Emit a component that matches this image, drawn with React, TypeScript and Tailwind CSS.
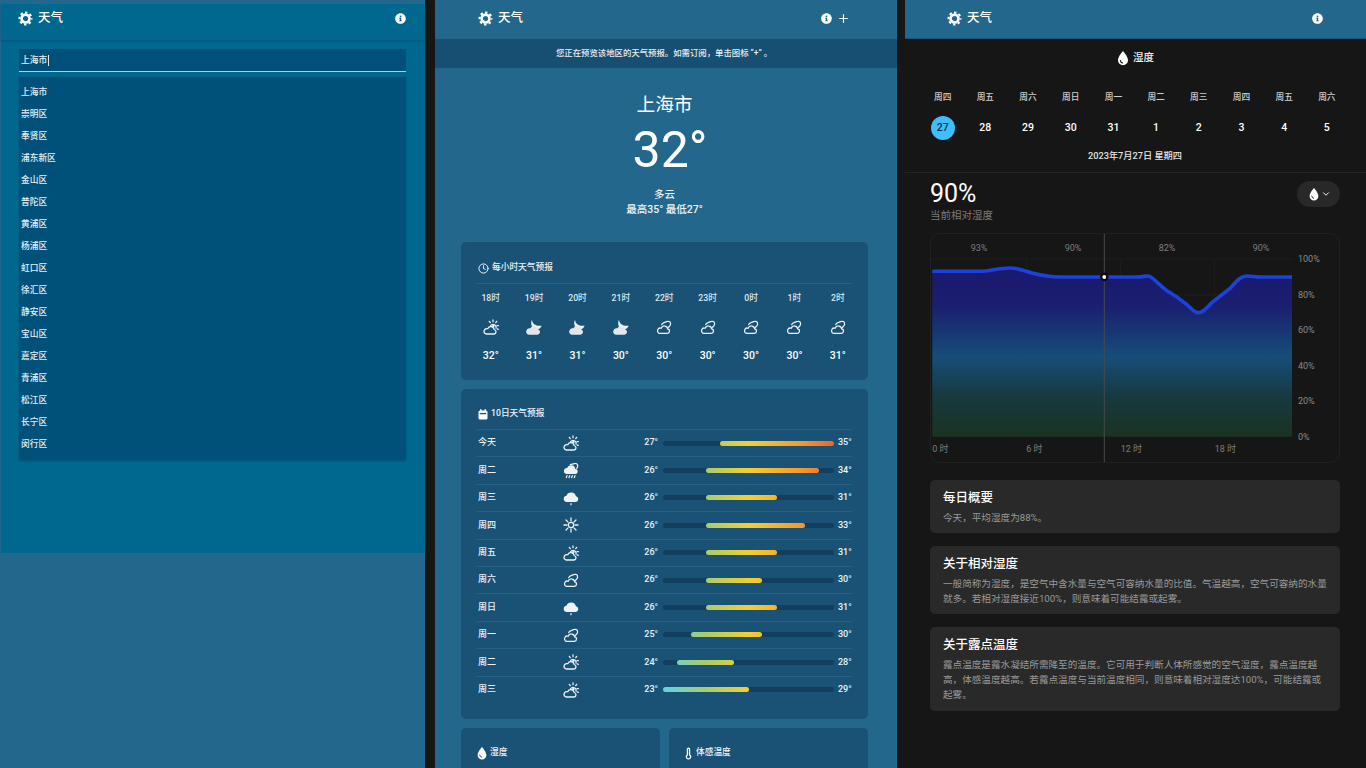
import React from 'react';
import { FaInfoCircle } from 'react-icons/fa';
import { ChevronDown, Clock, Plus, Thermometer } from 'lucide-react';

type WeatherKind = 'partly' | 'moon' | 'clouds' | 'rain' | 'drizzle' | 'sun';

const cities = ['上海市', '崇明区', '奉贤区', '浦东新区', '金山区', '普陀区', '黄浦区', '杨浦区', '虹口区', '徐汇区', '静安区', '宝山区', '嘉定区', '青浦区', '松江区', '长宁区', '闵行区'];

const hours: { label: string; kind: WeatherKind; temp: string }[] = [
  { label: '18时', kind: 'partly', temp: '32°' },
  { label: '19时', kind: 'moon', temp: '31°' },
  { label: '20时', kind: 'moon', temp: '31°' },
  { label: '21时', kind: 'moon', temp: '30°' },
  { label: '22时', kind: 'clouds', temp: '30°' },
  { label: '23时', kind: 'clouds', temp: '30°' },
  { label: '0时', kind: 'clouds', temp: '30°' },
  { label: '1时', kind: 'clouds', temp: '30°' },
  { label: '2时', kind: 'clouds', temp: '31°' },
];

const days: { label: string; kind: WeatherKind; low: string; high: string; from: number; to: number }[] = [
  { label: '今天', kind: 'partly', low: '27°', high: '35°', from: 0.333, to: 1 },
  { label: '周二', kind: 'rain', low: '26°', high: '34°', from: 0.25, to: 0.914 },
  { label: '周三', kind: 'drizzle', low: '26°', high: '31°', from: 0.25, to: 0.667 },
  { label: '周四', kind: 'sun', low: '26°', high: '33°', from: 0.25, to: 0.83 },
  { label: '周五', kind: 'partly', low: '26°', high: '31°', from: 0.25, to: 0.667 },
  { label: '周六', kind: 'clouds', low: '26°', high: '30°', from: 0.25, to: 0.58 },
  { label: '周日', kind: 'drizzle', low: '26°', high: '31°', from: 0.25, to: 0.667 },
  { label: '周一', kind: 'clouds', low: '25°', high: '30°', from: 0.165, to: 0.58 },
  { label: '周二', kind: 'partly', low: '24°', high: '28°', from: 0.084, to: 0.414 },
  { label: '周三', kind: 'partly', low: '23°', high: '29°', from: 0, to: 0.5 },
];

const calendar = [
  ['周四', '27'], ['周五', '28'], ['周六', '29'], ['周日', '30'], ['周一', '31'],
  ['周二', '1'], ['周三', '2'], ['周四', '3'], ['周五', '4'], ['周六', '5'],
];

const TRACK_WIDTH = 171;

const Gear: React.FC = () => (
  <svg width="15" height="15" viewBox="0 0 24 24" fill="none" stroke="#fff" className="shrink-0">
    <circle cx="12" cy="12" r="6.300" strokeWidth="4.200" />
    <circle cx="12" cy="12" r="9.600" strokeWidth="3.200" strokeDasharray="3.900 3.640" strokeDashoffset="1.950" />
  </svg>
);

const Drop: React.FC<{ size?: number; inner: string }> = ({ size = 12, inner }) => (
  <svg width={size} height={size} viewBox="0 0 24 24">
    <path d="M12 1.500C12 1.500 4.500 9.500 4.500 15.500a7.500 7.500 0 0 0 15 0C19.500 9.500 12 1.500 12 1.500z" fill="#fff" />
    <path d="M8 15.500a4.500 4.500 0 0 0 3.500 4" fill="none" stroke={inner} strokeWidth="1.600" strokeLinecap="round" />
  </svg>
);

const CalendarIcon: React.FC = () => (
  <svg width="10" height="11" viewBox="0 0 20 22">
    <rect x="1" y="3" width="18" height="18" rx="3" fill="#fff" />
    <rect x="4" y="0.500" width="3" height="4" fill="#fff" />
    <rect x="13" y="0.500" width="3" height="4" fill="#fff" />
    <rect x="3.500" y="8" width="13" height="2.500" fill="#195275" />
  </svg>
);

const WeatherIcon: React.FC<{ kind: WeatherKind }> = ({ kind }) => {
  const outline = { fill: 'none', stroke: '#eef2f5', strokeWidth: 1.9, strokeLinecap: 'round' as const, strokeLinejoin: 'round' as const };
  return (
    <svg width="16" height="16" viewBox="0 0 24 24" className="shrink-0">
      {kind === 'partly' && (
        <>
          <path d="M4.500 22.500h11.500a3.400 3.400 0 0 0 .6-6.750 5 5 0 0 0-9.500-1.200A4 4 0 0 0 4.500 22.500z" {...outline} />
          <path d="M11.500 10a4.500 4.500 0 0 1 8 3.800" {...outline} />
          <path d="M15 1.500v2.500M9.500 3.500l1.400 2M20.500 3.500l-1.400 2M23 10h-2M23 15.500l-1.800-.8" {...outline} />
          <circle cx="15.500" cy="10.500" r="1.800" fill="#eef2f5" />
        </>
      )}
      {kind === 'moon' && (
        <>
          <path d="M9 1c.5 6 5.500 10 14.500 9-1 3-3.500 5-6.500 5.500-4 .5-7-1.500-8.500-5.500C7.500 7 7.500 4 9 1z" fill="#eef2f5" />
          <path d="M4 23.500h13a4 4 0 0 0 1.500-7.700 6.500 6.500 0 0 0-12-1.800A4.800 4.800 0 0 0 4 23.500z" fill="#e4e7ea" />
        </>
      )}
      {kind === 'clouds' && (
        <>
          <path d="M5 21.500h12a3.300 3.300 0 0 0 .5-6.550 5 5 0 0 0-9.700-1.100A3.900 3.900 0 0 0 5 21.500z" {...outline} />
          <path d="M8.500 8.500c.5-1.500 1.800-2.700 3.500-3.200l5-1.600a3.500 3.500 0 0 1 4.800 2.500c.5 2.300-.5 4-1.800 5l-1.800 1.500" {...outline} />
        </>
      )}
      {kind === 'rain' && (
        <>
          <path d="M5 16.500h13a3.800 3.800 0 0 0 .5-7.600 6.500 6.500 0 0 0-12.500-1.300A4.500 4.500 0 0 0 5 16.500z" fill="#eef2f5" />
          <path d="M11 2.500l6-1.500a3.500 3.500 0 0 1 5 3c.2 1.500-.5 3-1.500 4" {...outline} />
          <path d="M6 19l-1 3M10 19l-1 3M14 19l-1 3M18 19l-1 3" {...outline} />
        </>
      )}
      {kind === 'drizzle' && (
        <>
          <path d="M5 18h14a4.300 4.300 0 0 0 .5-8.500 7.500 7.500 0 0 0-14.300-.8A4.700 4.700 0 0 0 5 18z" fill="#eef2f5" />
          <path d="M12 20.500v1.500" {...outline} />
        </>
      )}
      {kind === 'sun' && (
        <>
          <circle cx="12" cy="12" r="4" {...outline} />
          <path d="M12 1.500v4.500M12 18v4.500M1.500 12H6M18 12h4.500M4.500 4.500l3.200 3.200M16.300 16.300l3.200 3.200M19.500 4.500l-3.200 3.200M7.700 16.300l-3.200 3.200" {...outline} />
        </>
      )}
    </svg>
  );
};

const TopTitle: React.FC = () => (
  <div className="flex items-center">
    <Gear />
    <span className="ml-[5px] text-[12.500px] leading-none font-medium text-white">天气</span>
  </div>
);

const HumidityChart: React.FC = () => {
  const line = 'M2.300 38.300 L50 38.300 C60 38.300 68 35 80 35 C90 35 95 38.500 103 40.300 C112 42.500 120 44 130 44 L208 44 C214 44 216 42 220 43.500 C226 47 230 53 237 57.700 C243 61.500 246 63 250 66.300 L258 72.500 C262 76 264 79.700 268.300 79.700 C274 79.700 277 74 283 68.700 L300 55.500 C306 49 310 43 317 43 C322 43 325 44 330 44 L362 44';
  const area = `${line} L362 203.700 L2.300 203.700 Z`;
  return (
    <div className="mt-[10px] ml-[25px] w-[410px] h-[230px] rounded-[10px] border border-[#202020]">
      <svg width="408" height="228" viewBox="1 1 408 228" className="block font-['Roboto','Noto_Sans_CJK_SC',sans-serif]">
        <defs>
          <linearGradient id="humidity-fill" x1="0" y1="44" x2="0" y2="204" gradientUnits="userSpaceOnUse">
            <stop offset="0" stopColor="#1a1a6e" />
            <stop offset="0.18" stopColor="#1b1f70" />
            <stop offset="0.5" stopColor="#164d78" />
            <stop offset="0.75" stopColor="#17393f" />
            <stop offset="1" stopColor="#1a3320" />
          </linearGradient>
        </defs>
        {[26, 62, 97, 133, 168].map((y) => (
          <line key={y} x1="2" x2="362" y1={y} y2={y} stroke="#1e1e1e" strokeWidth="1" />
        ))}
        {[96.3, 190.7, 284.7].map((x) => (
          <line key={x} x1={x} x2={x} y1="26" y2="204" stroke="#1e1e1e" strokeWidth="1" />
        ))}
        <path d={area} fill="url(#humidity-fill)" />
        <path d={line} fill="none" stroke="#1b43dc" strokeWidth="3.600" />
        <line x1="174.300" x2="174.300" y1="1" y2="229" stroke="#454a4d" strokeWidth="1" />
        <circle cx="174.300" cy="44" r="4.200" fill="#0c0c0c" />
        <circle cx="174.300" cy="44" r="1.900" fill="#fff" />
        {[['93%', 49], ['90%', 143], ['82%', 237], ['90%', 331]].map(([label, x]) => (
          <text key={`${label}-${x}`} x={x} y="18" fontSize="9" fill="#7d7d7d" textAnchor="middle">{label}</text>
        ))}
        {[['100%', 29], ['80%', 64.7], ['60%', 100], ['40%', 136], ['20%', 171], ['0%', 207]].map(([label, y]) => (
          <text key={label} x="368" y={y} fontSize="9" fill="#8a8a8a">{label}</text>
        ))}
        {[['0 时', 2.3], ['6 时', 96.3], ['12 时', 190.7], ['18 时', 284.7]].map(([label, x]) => (
          <text key={label} x={x} y="218.500" fontSize="9" fill="#7d7d7d">{label}</text>
        ))}
      </svg>
    </div>
  );
};

const InfoCard: React.FC<{ title: string; className: string; body: string }> = ({ title, className, body }) => (
  <div className={`ml-[25px] w-[410px] rounded-[5px] bg-[#292929] pl-[13px] pr-[12px] pt-[9px] ${className}`}>
    <div className="text-[12.500px] leading-[17px] font-medium text-white">{title}</div>
    <p className="mt-[4px] text-[9.600px] leading-[15px] text-[#9a9a9a]">{body}</p>
  </div>
);

export default function App() {
  return (
    <div className="w-[1366px] h-[768px] overflow-hidden flex bg-[#161616] font-['Roboto','Noto_Sans_CJK_SC',sans-serif]">
      {/* 搜索 */}
      <section className="w-[425px] shrink-0 h-full bg-[#24678c] pt-[4px] pl-[1px]">
        <div className="h-[549px] bg-[#00678f]">
          <header className="h-[36px] pl-[17px] pr-[19px] pb-[8px] flex items-center justify-between shadow-[0_1px_2px_rgba(0,50,80,0.35)]">
            <TopTitle />
            <FaInfoCircle className="text-white text-[11px]" />
          </header>
          <div className="mt-[9px] mx-[18px] w-[387px] h-[23px] bg-[#00517a] border-b border-[#a8cfe2] pl-[2px] flex items-center">
            <span className="text-[8.700px] font-medium leading-none text-[#eef4f7]">上海市</span>
            <span className="ml-[1px] w-px h-[11px] bg-[#dfe9ef]"></span>
          </div>
          <ul className="mt-[5px] mx-[18px] w-[387px] h-[383px] bg-[#00517a] pt-[5px] pl-[2px] shadow-[0_1px_2px_rgba(0,40,70,0.35)]">
            {cities.map((city) => (
              <li key={city} className="h-[22px] flex items-center text-[8.700px] font-medium text-[#e8eff3]">{city}</li>
            ))}
          </ul>
        </div>
      </section>

      {/* 预览 */}
      <section className="ml-[10px] w-[462px] shrink-0 h-full bg-[#24678c] overflow-hidden">
        <header className="h-[39px] pl-[43px] pr-[47px] pb-[3px] flex items-center justify-between">
          <TopTitle />
          <div className="flex items-center gap-[5px]">
            <FaInfoCircle className="text-white text-[11px]" />
            <Plus className="text-white" size={13} strokeWidth={2.200} />
          </div>
        </header>
        <div className="h-[29px] bg-[#174f73] pr-[4px] flex items-center justify-center text-[8.400px] font-medium text-[#e8eff3]">
          {'您正在预览该地区的天气预报。如需订阅\uFF0C单击图标 “+” 。'}
        </div>
        <div className="h-[174px] pt-[26px] pr-[3px] flex flex-col items-center text-white">
          <div className="text-[18.700px] leading-[22px]">上海市</div>
          <div className="mt-[3px] h-[62px] text-[50px] leading-[62px] pl-[11px]">32°</div>
          <div className="mt-[7px] text-[10.500px] leading-[14px] font-medium text-[#eef3f6]">多云</div>
          <div className="mt-px text-[10.500px] leading-[14px] font-medium text-[#eef3f6]">最高35° 最低27°</div>
        </div>

        <div className="ml-[26px] w-[407px] h-[138px] rounded-[5px] bg-[#195275] px-[17px] pt-[18px]">
          <div className="h-[16px] flex items-center text-[8.700px] font-medium text-[#eef3f6]">
            <Clock size={11} strokeWidth={2} className="text-white mr-[3px]" />
            每小时天气预报
          </div>
          <div className="mt-[7px] border-t border-[#256184] -mx-px"></div>
          <div className="-mx-[9px] mt-[6px] flex">
            {hours.map((hour) => (
              <div key={hour.label} className="w-[43.400px] shrink-0 flex flex-col items-center">
                <div className="h-[16px] leading-[16px] text-[8.700px] font-medium text-[#dfe8ee]">{hour.label}</div>
                <div className="mt-[9px] h-[24px] flex items-center"><WeatherIcon kind={hour.kind} /></div>
                <div className="mt-[10px] text-[10.500px] leading-[14px] font-medium text-white">{hour.temp}</div>
              </div>
            ))}
          </div>
        </div>

        <div className="mt-[9px] ml-[26px] w-[407px] h-[330px] rounded-[5px] bg-[#195275] px-[17px] pt-[17px]">
          <div className="h-[16px] flex items-center text-[8.700px] font-medium text-[#eef3f6]">
            <span className="mr-[3px]"><CalendarIcon /></span>
            10日天气预报
          </div>
          <div className="mt-[7px] -mx-px">
            {days.map((day, index) => (
              <div key={`${day.label}-${index}`} className="h-[27.400px] border-t border-[#256184] flex items-center px-px text-[9px] font-medium text-[#eef3f6]">
                <span className="w-[85px] shrink-0">{day.label}</span>
                <WeatherIcon kind={day.kind} />
                <span className="w-[80px] shrink-0 text-right pr-px">{day.low}</span>
                <div className="ml-[4px] w-[171px] h-[5px] shrink-0 rounded-full bg-[#123f5d]">
                  <div
                    className="h-[5px] rounded-full bg-[linear-gradient(90deg,#5fd3e6_0%,#a9cc6e_25%,#f3cf30_50%,#f59a2b_80%,#f0622b_100%)]"
                    style={{
                      marginLeft: day.from * TRACK_WIDTH,
                      width: (day.to - day.from) * TRACK_WIDTH,
                      backgroundSize: `${TRACK_WIDTH}px 100%`,
                      backgroundPosition: `${-day.from * TRACK_WIDTH}px 0`,
                    }}
                  ></div>
                </div>
                <span className="ml-[4px]">{day.high}</span>
              </div>
            ))}
          </div>
        </div>

        <div className="mt-[9px] ml-[26px] w-[407px] flex gap-[9px]">
          <div className="w-[199px] h-[60px] rounded-[5px] bg-[#195275] pl-[14px] pt-[17px] flex items-start text-[8.700px] font-medium text-[#eef3f6]">
            <span className="h-[16px] flex items-center gap-[1px]"><Drop size={14} inner="#195275" />湿度</span>
          </div>
          <div className="w-[199px] h-[60px] rounded-[5px] bg-[#195275] pl-[13px] pt-[17px] flex items-start text-[8.700px] font-medium text-[#eef3f6]">
            <span className="h-[16px] flex items-center gap-[1px]"><Thermometer size={13} className="text-white" strokeWidth={2.400} />体感温度</span>
          </div>
        </div>
      </section>

      {/* 湿度详情 */}
      <section className="ml-[8px] w-[461px] shrink-0 h-full bg-[#161616]">
        <header className="h-[39px] bg-[#24678c] border-b border-[#1b5475] pl-[42px] pr-[43px] pb-[2px] flex items-center justify-between">
          <TopTitle />
          <FaInfoCircle className="text-white text-[11px]" />
        </header>
        <div className="mt-[12px] h-[14px] pr-[2px] flex items-center justify-center gap-[2px] text-[10.500px] font-medium text-[#eeeeee]">
          <Drop size={16} inner="#161616" />
          湿度
        </div>
        <div className="mt-[25px] ml-[16.300px] flex">
          {calendar.map(([weekday, date], index) => (
            <div key={`${weekday}-${date}`} className="w-[42.700px] shrink-0 flex flex-col items-center">
              <div className="h-[14px] leading-[14px] text-[8.700px] font-medium text-[#cfcfcf]">{weekday}</div>
              <div className={`mt-[12px] size-[24px] rounded-full flex items-center justify-center text-[10.500px] font-medium ${index === 0 ? 'bg-[#40bdff] text-[#123040]' : 'text-white'}`}>{date}</div>
            </div>
          ))}
        </div>
        <div className="mt-[9px] h-[14px] leading-[14px] text-center text-[9.200px] font-medium text-[#e4e4e4] -ml-[1px]">2023年7月27日 星期四</div>
        <div className="mt-[9px] border-t border-[#252525] pl-[25px] pr-[26px] pt-[8px] flex justify-between">
          <div>
            <div className="text-[25px] leading-[25px] text-white">90%</div>
            <div className="mt-[3px] text-[10.500px] leading-[14px] text-[#7b7b7b]">当前相对湿度</div>
          </div>
          <div className="w-[43px] h-[26px] rounded-full bg-[#282828] flex items-center justify-center">
            <Drop size={14} inner="#282828" />
            <ChevronDown size={10} className="text-white" strokeWidth={2.200} />
          </div>
        </div>
        <HumidityChart />
        <InfoCard title="每日概要" className="mt-[17px] h-[53px]" body={'今天\uFF0C平均湿度为88%。'} />
        <InfoCard
          title="关于相对湿度"
          className="mt-[13px] h-[68px]"
          body={'一般简称为湿度\uFF0C是空气中含水量与空气可容纳水量的比值。气温越高\uFF0C空气可容纳的水量就多。若相对湿度接近100%\uFF0C则意味着可能结露或起雾。'}
        />
        <InfoCard
          title="关于露点温度"
          className="mt-[13px] h-[84px]"
          body={'露点温度是露水凝结所需降至的温度。它可用于判断人体所感觉的空气湿度\uFF0C露点温度越高\uFF0C体感温度越高。若露点温度与当前温度相同\uFF0C则意味着相对湿度达100%\uFF0C可能结露或起雾。'}
        />
      </section>
    </div>
  );
}
